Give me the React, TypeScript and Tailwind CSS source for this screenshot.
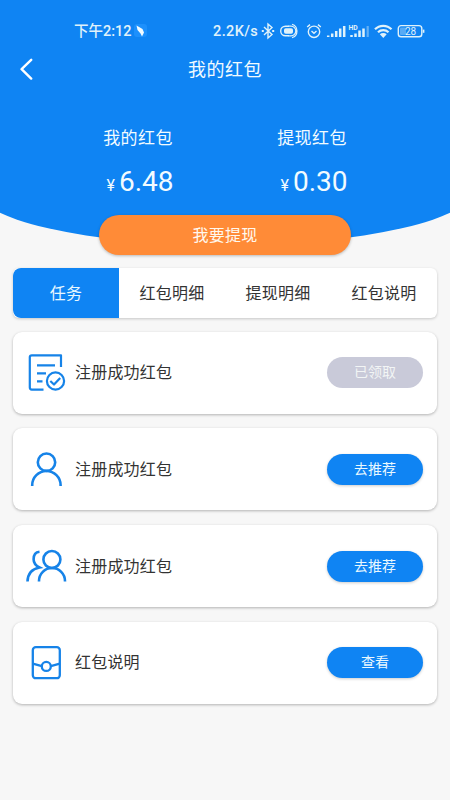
import { useState } from "react";
import type { ReactNode } from "react";

const tabs = ["任务", "红包明细", "提现明细", "红包说明"];

const wallets = [
    { label: "我的红包", amount: "6.48" },
    { label: "提现红包", amount: "0.30" },
];

const RegisterIcon = () => (
    <svg width="42" height="42" viewBox="0 0 42 42" fill="none" stroke="#1683e8" strokeWidth="2.2" strokeLinejoin="round">
        <path d="M18.5 37.6H6.8Q4.8 37.6 4.8 35.6V5.1Q4.8 3.3 6.8 3.3H36V15" />
        <path d="M12 13.3H30M12 21.3H21M12 29.3H17.5" />
        <circle cx="30.5" cy="29" r="8.6" />
        <path d="M25.3 29L29 32.5L35.2 26" />
    </svg>
);

const UserIcon = () => (
    <svg width="42" height="42" viewBox="0 0 42 42" fill="none" stroke="#1683e8" strokeWidth="2.6">
        <circle cx="21.5" cy="14.2" r="8.7" />
        <path d="M7.2 38V37.2A14.2 14.2 0 0 1 35.6 37.2V38" />
    </svg>
);

const UsersIcon = () => (
    <svg width="42" height="42" viewBox="0 0 42 42" fill="none" stroke="#1683e8" strokeWidth="2.6">
        <circle cx="26.9" cy="14.5" r="8.5" />
        <path d="M14 36.5V36A13 13 0 0 1 40 36V36.5" />
        <path d="M14.5 6.7C10.4 7.1 8.6 10.5 8.6 14.2C8.6 17.7 10.5 20.5 14.5 22.4C6.5 24 2.7 29 2.5 36.5" />
    </svg>
);

const PacketIcon = () => (
    <svg width="42" height="42" viewBox="0 0 42 42" fill="none" stroke="#1683e8" strokeWidth="2.3">
        <rect x="7.8" y="5.2" width="27" height="31" rx="3" />
        <circle cx="21.3" cy="24.4" r="4.5" />
        <path d="M7.8 21.6L16.8 24.1M25.8 24.1L34.8 21.6" />
    </svg>
);

const tasks: { title: string; action: string; done?: boolean; icon: ReactNode }[] = [
    { title: "注册成功红包", action: "已领取", done: true, icon: <RegisterIcon /> },
    { title: "注册成功红包", action: "去推荐", icon: <UserIcon /> },
    { title: "注册成功红包", action: "去推荐", icon: <UsersIcon /> },
    { title: "红包说明", action: "查看", icon: <PacketIcon /> },
];

const StatusBar = () => (
    <div className="flex h-[46px] items-center pl-[74px] pt-4 text-[#e0f2fa]">
        <span className="w-[59px] whitespace-nowrap pt-0.5 text-[14.5px] font-medium leading-none">下午2:12</span>
        {/* app notification */}
        <svg width="16" height="16" viewBox="0 0 16 16" className="shrink-0">
            <rect x="1" y="1" width="13" height="13" rx="3" fill="#1d90fc" />
            <path d="M3.5 2.5L9.5 6L11 9.5L9 13.5L7.5 10.5L4.5 7Z" fill="#f2fbff" />
        </svg>
        <span className="ml-[64px] w-[48px] whitespace-nowrap pt-0.5 text-[14.5px] font-medium leading-none tracking-[0.4px]">2.2K/s</span>
        <svg width="164" height="20" viewBox="0 0 164 20" fill="none" stroke="currentColor" strokeWidth="1.4" className="shrink-0">
            {/* bluetooth */}
            <path d="M3 6L11 13.5L7 17V3L11 6.5L3 14" />
            <path d="M0.8 10H2.8M11.2 10H13.2" strokeWidth="1.8" />
            {/* vpn / cast pill */}
            <path d="M28 5.2H24.5A4.8 4.8 0 0 0 24.5 14.8H28" />
            <rect x="23" y="7.3" width="9" height="5.4" rx="1.8" fill="currentColor" stroke="none" />
            <path d="M27.5 5.2H30A4.8 4.8 0 0 1 30 14.8H27.5M31 3.3A7 7 0 0 1 31 16.7" strokeWidth="1.2" />
            {/* alarm */}
            <circle cx="53" cy="10.8" r="5.7" />
            <path d="M50.5 10L53 12.2L55.5 10M46.2 6L49 3.6M59.8 6L57 3.6" />
            {/* signal one */}
            <path d="M67.2 16V14.5M71.2 16V12.5M75.2 16V10M79.2 16V7.5M83.2 16V5" strokeWidth="2.5" />
            {/* signal two */}
            <path d="M90.5 16V14M94.5 16V12.5M98.5 16V9.5M102.5 16V7.5" strokeWidth="2.5" />
            <path d="M106.7 16V5" strokeWidth="2.2" opacity="0.4" />
            <text x="87.5" y="9" fontSize="6.8" fontWeight="700" fill="currentColor" stroke="none">HD</text>
            {/* wifi */}
            <path d="M114 8.3A11.5 11.5 0 0 1 130.5 8.3M117 11.3A7.5 7.5 0 0 1 127.5 11.3" strokeWidth="2.2" />
            <path d="M118.8 13.3A5 5 0 0 1 125.7 13.3L122.3 17Z" fill="currentColor" stroke="none" />
            {/* battery */}
            <rect x="137.3" y="4.6" width="23.5" height="11.2" rx="2.8" />
            <rect x="139" y="6.4" width="6" height="7.6" rx="1" fill="currentColor" opacity="0.35" stroke="none" />
            <path d="M162.6 8.6V11.8" strokeWidth="1.6" />
            <text x="144" y="13.8" fontSize="10" fill="currentColor" stroke="none">28</text>
        </svg>
    </div>
);

export default function App() {
    const [activeTab, setActiveTab] = useState(0);

    return (
        <div className="h-[800px] w-[450px] overflow-hidden bg-[#f7f7f7] font-[Roboto,'Noto_Sans_CJK_SC',sans-serif] text-[#333]">
            <header className="-ml-[25px] h-[245px] w-[500px] rounded-b-[50%_57px] bg-[#0f84f3] px-[25px] text-[#f2fbff]">
                <StatusBar />
                <div className="grid h-[46px] grid-cols-3 items-center">
                    <button aria-label="返回" className="ml-[19px] w-4">
                        <svg width="16" height="22" viewBox="0 0 16 22" fill="none" stroke="white" strokeWidth="2.4" strokeLinecap="round" strokeLinejoin="round">
                            <path d="M12.2 1.8L2.6 11.2L12.2 20.6" />
                        </svg>
                    </button>
                    <h1 className="pt-0.5 text-center text-[18px] leading-none tracking-[0.5px]">我的红包</h1>
                </div>
                <div className="mt-[34px] flex pl-[51px]">
                    {wallets.map((wallet) => (
                        <div key={wallet.label} className="w-[174px] text-center">
                            <p className="text-[17px] leading-6 tracking-[0.4px]">{wallet.label}</p>
                            <p className="mt-4 flex items-baseline justify-center gap-[4px] pl-1 leading-8">
                                <span className="text-[16px]">¥</span>
                                <span className="text-[28px] leading-8">{wallet.amount}</span>
                            </p>
                        </div>
                    ))}
                </div>
            </header>

            <button className="relative mx-auto -mt-[30px] block h-10 w-[252px] rounded-full bg-[#ff8b37] pt-px text-[16px] tracking-[0.3px] text-[#fff8ee] shadow-[0_1px_3px_rgba(0,0,0,0.25)]">
                我要提现
            </button>

            <main className="px-[13px]">
                <nav className="mt-[13px] grid h-[49.5px] grid-cols-4 overflow-hidden rounded-[6px] bg-white shadow-[0_1px_3px_rgba(0,0,0,0.2)]">
                    {tabs.map((tab, index) => (
                        <button
                            key={tab}
                            onClick={() => setActiveTab(index)}
                            className={`pt-0.5 text-[16px] tracking-[0.2px] ${activeTab === index ? "rounded-l-[8px] bg-[#0f84f3] text-[#e9f8ff]" : "text-[#333]"}`}
                        >
                            {tab}
                        </button>
                    ))}
                </nav>

                <ul className="mt-[14px] flex flex-col gap-[14.75px]">
                    {tasks.map((task, index) => (
                        <li
                            key={index}
                            className="flex h-[82px] items-center rounded-[9px] bg-white pl-3 pr-[14px] shadow-[0_1px_3px_rgba(0,0,0,0.28)]"
                        >
                            {task.icon}
                            <span className="ml-2 flex-1 pt-px text-[16px] tracking-[0.2px]">{task.title}</span>
                            <button
                                className={`h-[31px] w-24 rounded-full text-[14px] ${task.done ? "bg-[#c9cad9] text-[#f2f5f5]" : "bg-[#0f84f3] text-[#e9f8ff] shadow-[0_1px_3px_rgba(0,0,0,0.2)]"}`}
                            >
                                {task.action}
                            </button>
                        </li>
                    ))}
                </ul>
            </main>
        </div>
    );
}
